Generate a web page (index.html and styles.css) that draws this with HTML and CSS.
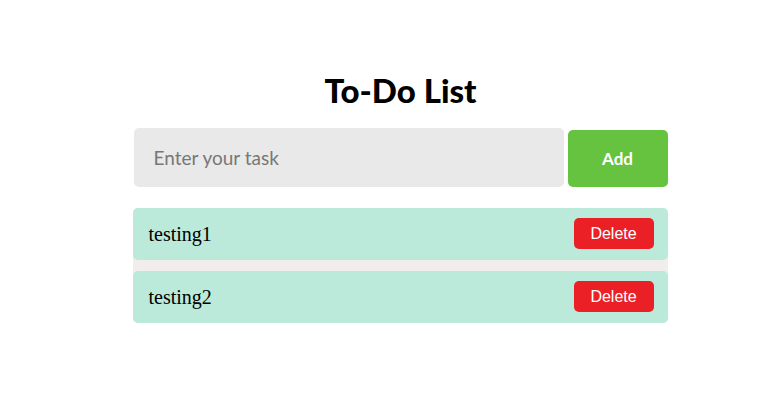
FILE: index.html
```html
<!DOCTYPE html>
<html lang="en">
<head>
<meta charset="utf-8">
<title>To-Do List</title>
<link rel="stylesheet" href="styles.css">
</head>
<body>
<div class="app">
  <h1 class="title">To-Do List</h1>
  <div class="entry">
    <input class="task-input" type="text" placeholder="Enter your task">
    <button class="add-btn">Add</button>
  </div>
  <ul class="list">
    <li class="item"><span class="item-text">testing1</span><button class="del-btn">Delete</button></li>
    <li class="item"><span class="item-text">testing2</span><button class="del-btn">Delete</button></li>
  </ul>
</div>
</body>
</html>
```
FILE: styles.css
```css
html, body {
  margin: 0;
  padding: 0;
  background: #ffffff;
}
.app {
  width: 560px;
  box-sizing: border-box;
  margin: 0 auto;
  padding: 70px 0 0 26px;
  font-family: "Lato", "Open Sans", sans-serif;
}
.title {
  margin: 0;
  height: 44px;
  text-align: center;
  font-size: 33px;
  font-weight: 900;
  line-height: 40px;
  color: #000;
}
.entry {
  display: flex;
  align-items: flex-end;
  gap: 4px;
  margin-top: 14px;
}
.task-input {
  width: 430px;
  height: 59px;
  box-sizing: border-box;
  border: none;
  border-radius: 5px;
  background: #e9e9e9;
  padding: 0 20px;
  font-family: "Lato", sans-serif;
  font-size: 19px;
  color: #333;
  outline: none;
}
.task-input::placeholder {
  color: #777;
}
.add-btn {
  width: 100px;
  height: 57px;
  border: none;
  border-radius: 5px;
  background: #66c340;
  color: #fff;
  font-family: "Lato", sans-serif;
  font-weight: 700;
  font-size: 17px;
}
.list {
  list-style: none;
  margin: 21px 0 0 -1px;
  padding: 0;
  width: 535px;
  display: flex;
  flex-direction: column;
  gap: 11px;
  background: #f1eded;
  border-radius: 5px;
}
.item {
  height: 52px;
  box-sizing: border-box;
  display: flex;
  align-items: center;
  justify-content: space-between;
  padding: 0 14px 0 16px;
  background: #bbe9da;
  border-radius: 5px;
}
.item-text {
  font-family: "Liberation Serif", "Times New Roman", serif;
  font-size: 20px;
  color: #000;
}
.del-btn {
  width: 80px;
  height: 31px;
  border: none;
  border-radius: 5px;
  background: #eb2027;
  color: #fff;
  font-family: "Liberation Sans", Arial, sans-serif;
  font-size: 16px;
  padding: 0;
  margin-top: -1px;
}
```
